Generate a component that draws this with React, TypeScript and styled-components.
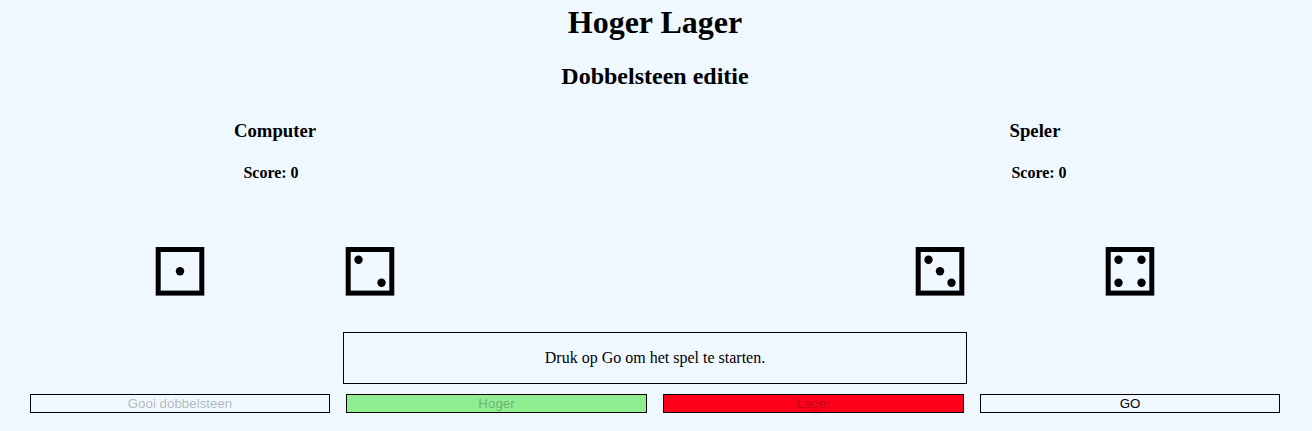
import React from "react";
import styled, { createGlobalStyle } from "styled-components";

const GlobalStyle = createGlobalStyle`
  * { box-sizing: border-box; }
  body {
    margin: 0;
    background: #f0f8ff;
    color: #000;
    font-family: "Liberation Serif", "Times New Roman", serif;
  }
`;

const Page = styled.main`
  display: flex;
  flex-direction: column;
  width: 1310px;
  height: 431px;
  overflow: hidden;
`;

const Title = styled.h1`
  margin: 4px 0 0;
  font-size: 32px;
  line-height: 37px;
  text-align: center;
`;

const Subtitle = styled.h2`
  margin: 21px 0 0;
  font-size: 24px;
  line-height: 28px;
  text-align: center;
`;

const Board = styled.section`
  display: grid;
  grid-template-columns: 380px 380px;
  justify-content: center;
  column-gap: 380px;
  margin-top: 30px;
`;

const Side = styled.div`
  display: flex;
  flex-direction: column;
`;

const Name = styled.h3`
  margin: 0;
  font-size: 18.72px;
  line-height: 22px;
  text-align: center;
`;

const Score = styled.h4<{ $shift: "left" | "right" }>`
  margin: 22px 0 0;
  padding-${(p) => (p.$shift === "left" ? "right" : "left")}: 8px;
  font-size: 16px;
  line-height: 18px;
  text-align: center;
`;

const DiceRow = styled.div`
  display: grid;
  grid-template-columns: 1fr 1fr;
  justify-items: center;
  margin-top: 64px;
`;

const DieImage = styled.svg`
  display: block;
  width: 50px;
  height: 50px;
`;

const Message = styled.p`
  display: flex;
  align-items: center;
  justify-content: center;
  align-self: center;
  width: 624px;
  height: 52px;
  margin: 36px 0 0;
  border: 1px solid #000;
  font-size: 16px;
`;

const Controls = styled.div`
  display: grid;
  grid-template-columns: 300px 301px 301px 300px;
  column-gap: 16px;
  margin: 10px 30px 0;
`;

const Button = styled.button<{ $fill?: string }>`
  height: 19px;
  padding: 0;
  border: 1px solid #000;
  border-radius: 0;
  background: ${(p) => p.$fill ?? "#f0f8ff"};
  color: #000;
  font: 13.333px/17px "Liberation Sans", Arial, sans-serif;

  &:disabled {
    color: rgba(16, 16, 16, 0.3);
  }
`;

const PIPS: Record<number, [number, number][]> = {
  1: [[25, 25.3]],
  2: [[13.5, 13.8], [36.5, 36.8]],
  3: [[13.5, 13.8], [25, 25.3], [36.5, 36.8]],
  4: [[13.5, 13.8], [36.5, 13.8], [13.5, 36.8], [36.5, 36.8]],
};

function Die({ value }: { value: number }) {
  return (
    <DieImage viewBox="0 0 50 50" role="img" aria-label={String(value)}>
      <rect x="3.2" y="3.5" width="43.6" height="43.6" fill="none" stroke="#000" strokeWidth="5" />
      {PIPS[value].map(([x, y]) => (
        <circle key={`${x}-${y}`} cx={x} cy={y} r="4.2" />
      ))}
    </DieImage>
  );
}

export default function App() {
  return (
    <>
      <GlobalStyle />
      <Page>
        <Title>Hoger Lager</Title>
        <Subtitle>Dobbelsteen editie</Subtitle>
        <Board>
          <Side>
            <Name>Computer</Name>
            <Score $shift="left">Score: 0</Score>
            <DiceRow>
              <Die value={1} />
              <Die value={2} />
            </DiceRow>
          </Side>
          <Side>
            <Name>Speler</Name>
            <Score $shift="right">Score: 0</Score>
            <DiceRow>
              <Die value={3} />
              <Die value={4} />
            </DiceRow>
          </Side>
        </Board>
        <Message>Druk op Go om het spel te starten.</Message>
        <Controls>
          <Button disabled>Gooi dobbelsteen</Button>
          <Button disabled $fill="#90ee90">Hoger</Button>
          <Button disabled $fill="#ff0019">Lager</Button>
          <Button>GO</Button>
        </Controls>
      </Page>
    </>
  );
}
